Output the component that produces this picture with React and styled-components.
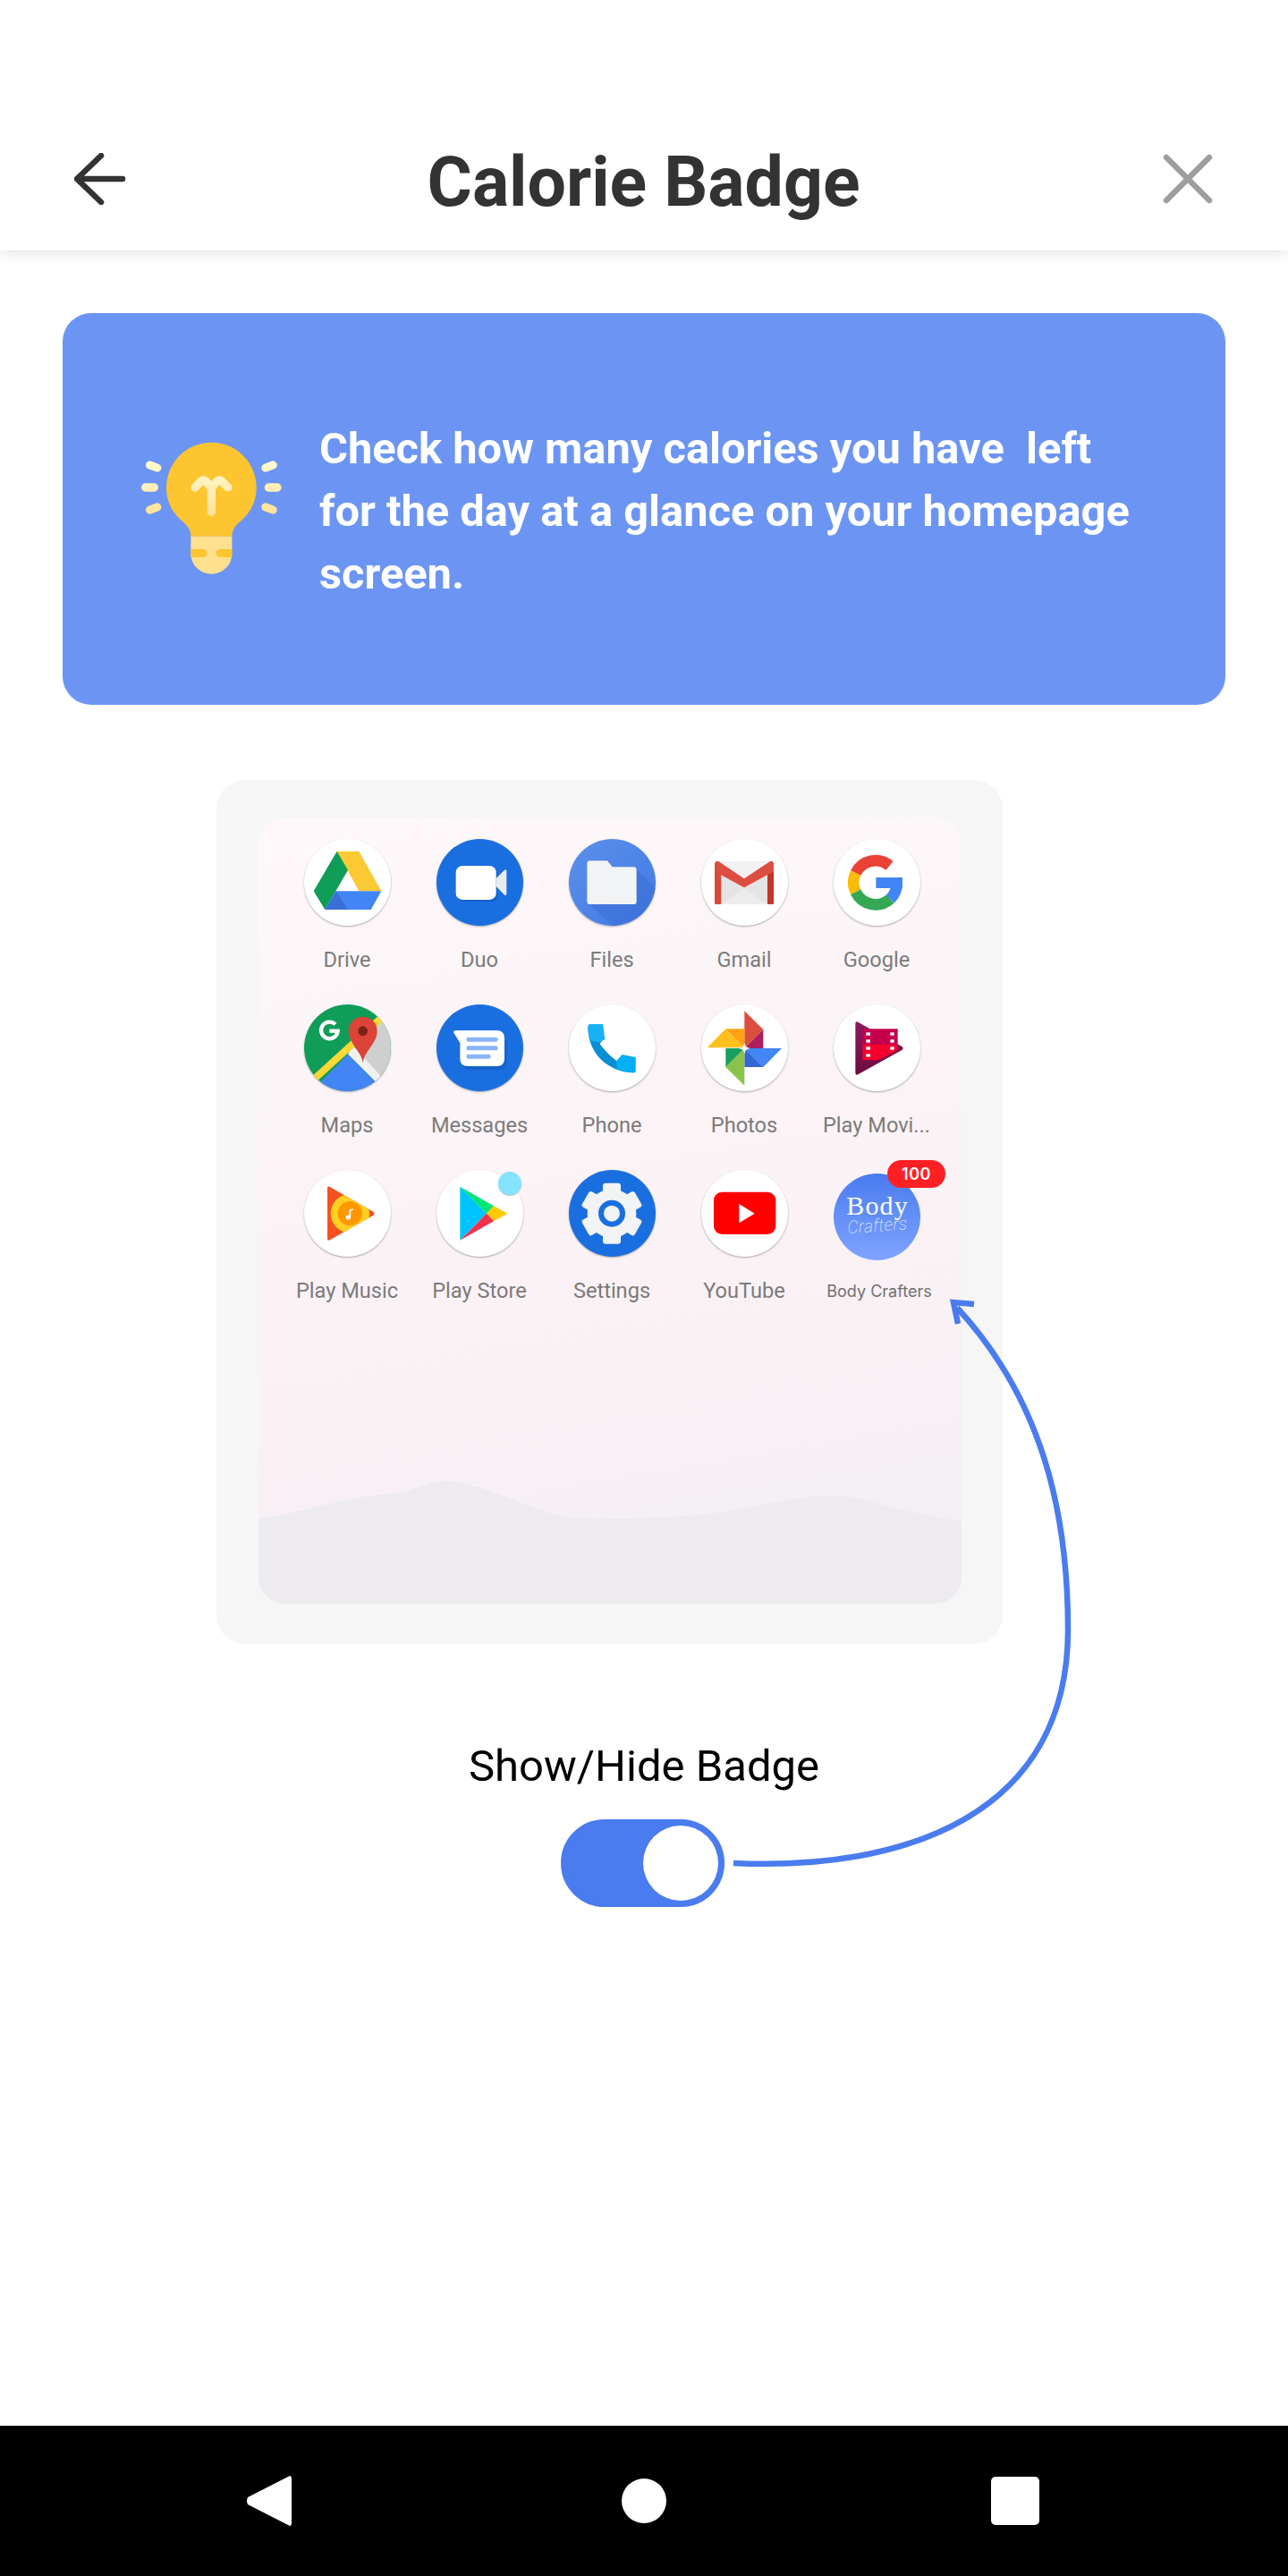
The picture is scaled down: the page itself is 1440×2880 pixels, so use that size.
import React from 'react';
import styled, { createGlobalStyle } from 'styled-components';

const GlobalStyle = createGlobalStyle`
  html, body {
    margin: 0;
    padding: 0;
    background: #fff;
  }
  * {
    box-sizing: border-box;
  }
`;

const Page = styled.div`
  position: relative;
  width: 1440px;
  height: 2880px;
  display: flex;
  flex-direction: column;
  overflow: hidden;
  font-family: Roboto, "Liberation Sans", sans-serif;
  background: #fff;
`;

const Header = styled.header`
  height: 280px;
  padding: 120px 84px 0 83px;
  display: grid;
  grid-template-columns: 1fr auto 1fr;
  align-items: center;
  flex: none;
  box-shadow: 0 2px 14px rgba(0, 0, 0, 0.13);
`;

const HeaderIcon = styled.svg`
  display: block;
  justify-self: ${p => (p.$end ? 'end' : 'start')};
  fill: none;
  stroke: ${p => p.$color};
  stroke-width: 6.5;
  stroke-linecap: round;
  stroke-linejoin: round;
`;

const Title = styled.h1`
  margin: 8px 0 0;
  font-size: 77px;
  line-height: 90px;
  font-weight: 700;
  color: #333;
`;

const InfoCard = styled.section`
  flex: none;
  height: 438px;
  margin: 70px 70px 0;
  padding: 6px 0 0 50px;
  display: flex;
  align-items: center;
  gap: 17px;
  border-radius: 32px;
  background: #6c95f3;
`;

const BulbIcon = styled.svg`
  flex: none;
  display: block;
  margin-top: -6px;
`;

const InfoText = styled.p`
  margin: 0;
  font-size: 48.8px;
  line-height: 70px;
  font-weight: 700;
  color: #fff;
  white-space: pre;
`;

const Frame = styled.div`
  flex: none;
  width: 879px;
  height: 966px;
  margin: 84px 0 0 242px;
  padding: 42px 46px 45px 47px;
  border-radius: 32px;
  background: #f6f6f6;
`;

const Screen = styled.div`
  position: relative;
  height: 100%;
  padding: 24px 0 0 25px;
  border-radius: 30px;
  overflow: hidden;
  background: linear-gradient(170deg, #fef8fa 0%, #fbf3f6 45%, #f8f0f4 75%, #f3eff4 90%);
`;

const Mountains = styled.svg`
  position: absolute;
  left: 0;
  bottom: 0;
  display: block;
`;

const AppGrid = styled.div`
  position: relative;
  display: grid;
  grid-template-columns: repeat(5, 148px);
  grid-auto-rows: 185px;
`;

const AppCell = styled.div`
  position: relative;
  display: flex;
  flex-direction: column;
  align-items: center;
`;

const Tile = styled.div`
  width: 97px;
  height: 97px;
  border-radius: 50%;
  overflow: hidden;
  background: ${p => p.$bg || '#fff'};
  box-shadow: 0 1px 2px rgba(0, 0, 0, 0.32);
  svg {
    display: block;
  }
`;

const LogoTile = styled(Tile)`
  margin-top: 4px;
  box-shadow: none;
`;

const AppLabel = styled.span`
  margin-top: 23px;
  font-size: 23.6px;
  line-height: 30px;
  color: #7b7b7b;
  white-space: nowrap;
`;

const LogoLabel = styled(AppLabel)`
  margin: 20px 0 0 6px;
  font-family: Inter, Roboto, sans-serif;
  font-size: 18px;
  color: #707070;
`;

const Dot = styled.span`
  position: absolute;
  left: 95px;
  top: 2px;
  width: 26px;
  height: 26px;
  border-radius: 50%;
  background: #84e3ff;
  box-shadow: 0 1px 1px rgba(0, 0, 0, 0.25);
`;

const CountBadge = styled.span`
  position: absolute;
  left: 86px;
  top: -11px;
  width: 65px;
  height: 31px;
  border-radius: 16px;
  background: #ff2024;
  color: #fff;
  font-family: Inter, Roboto, sans-serif;
  font-size: 18px;
  font-weight: 600;
  letter-spacing: 0.5px;
  line-height: 31px;
  text-align: center;
`;

const ToggleArea = styled.div`
  flex: none;
  display: flex;
  flex-direction: column;
  align-items: center;
  padding-top: 107px;
`;

const ToggleLabel = styled.div`
  font-size: 49px;
  line-height: 60px;
  color: #000;
`;

const Toggle = styled.div`
  width: 183px;
  height: 98px;
  margin: 29px 3px 0 0;
  display: flex;
  justify-content: flex-end;
  border: 7px solid #4a7bef;
  border-radius: 49px;
  background: #4a7bef;
`;

const Knob = styled.span`
  width: 84px;
  height: 84px;
  border-radius: 50%;
  background: #fff;
`;

const Callout = styled.svg`
  position: absolute;
  left: 800px;
  top: 1440px;
  display: block;
  fill: none;
  stroke: #4a7bef;
  stroke-width: 6.5;
`;

const NavBar = styled.nav`
  margin-top: auto;
  flex: none;
  height: 168px;
  background: #000;
  display: grid;
  grid-template-columns: 275px 51px 369px 50px 363px 54px;
  align-items: center;
`;

const NavBack = styled.svg`
  grid-column: 2;
  display: block;
`;

const NavHome = styled.span`
  grid-column: 4;
  width: 50px;
  height: 50px;
  border-radius: 50%;
  background: #fff;
`;

const NavRecent = styled.span`
  grid-column: 6;
  width: 54px;
  height: 54px;
  border-radius: 5px;
  background: #fff;
`;

const IconSvg = ({ box, children }) => (
  <svg width="97" height="97" viewBox={box}>{children}</svg>
);

const Bulb = () => (
  <BulbIcon width="220" height="200" viewBox="0 0 660 600">
    <defs>
      <linearGradient id="glow" gradientUnits="userSpaceOnUse" x1="0" y1="130" x2="0" y2="325">
        <stop offset="0" stopColor="#fffcd6" />
        <stop offset="1" stopColor="#ffe196" />
      </linearGradient>
    </defs>
    <path fill="#fdc530" d="M280 392C280 368 266 354 250 340C215 310 198 272 198 228A151 151 0 0 1 500 228C500 272 483 310 448 340C432 354 418 368 418 392Z" />
    <path fill="#ffe08f" d="M280 392H418V450A69 68 0 0 1 280 450Z" />
    <path fill="#fdc530" d="M280 435H321A13.5 13.5 0 0 1 321 462H280Z" />
    <path fill="#fdc530" d="M418 435H378A13.5 13.5 0 0 0 378 462H418Z" />
    <g fill="none" stroke="url(#glow)" strokeWidth="28" strokeLinecap="round" strokeLinejoin="round">
      <path d="M294 228L314 207Q322 200 330 207L349 228L368 207Q376 200 384 207L405 228" />
      <path d="M349 228V310" />
      <path d="M143 153L167 162M128 228H157M143 303L167 294M555 153L531 162M570 228H541M555 303L531 294" />
    </g>
  </BulbIcon>
);

const Drive = () => (
  <IconSvg box="178 113 291 291">
    <polygon fill="#fbc934" points="288,154 362,154 437,288 362,288" />
    <polygon fill="#0f9d58" points="288,154 325,217 248,350 210,288" />
    <polygon fill="#4285f4" points="285,288 437,288 402,350 248,350" />
    <polygon fill="#3b6fd8" points="285,288 325,350 248,350" />
  </IconSvg>
);

const Duo = () => (
  <IconSvg box="620 113 291 291">
    <rect x="689" y="209" width="135" height="115" rx="22" fill="#0f56b8" opacity="0.55" />
    <rect x="685" y="203" width="135" height="114" rx="22" fill="#fff" />
    <path fill="#e8ecef" d="M820 245L847 218Q855 212 855 222V296Q855 306 847 300L820 272Z" />
  </IconSvg>
);

const Files = () => (
  <IconSvg box="1066 113 291 291">
    <polygon fill="#3b6fd6" opacity="0.55" points="1293,215 1370,290 1370,420 1230,420 1127,325" />
    <path fill="#f1f3f4" d="M1137 186H1195L1212 207H1283Q1293 207 1293 217V322Q1293 332 1283 332H1137Q1127 332 1127 322V196Q1127 186 1137 186Z" />
  </IconSvg>
);

const Gmail = () => (
  <IconSvg box="310 113 291 291">
    <polygon fill="#f1f1f1" points="365,187 545,187 454,262" />
    <polygon fill="#e4e4e4" points="377,225 454,275 532,225 532,332 377,332" />
    <polygon fill="#ececec" points="377,332 454,278 532,332" />
    <rect x="355" y="205" width="22" height="127" rx="3" fill="#d9483b" />
    <rect x="532" y="205" width="21" height="127" rx="3" fill="#c1352a" />
    <path fill="#dc4e41" d="M355 198Q356 184 368 188L454 246L541 188Q553 184 553 198V222L454 276L355 222Z" />
  </IconSvg>
);

const Google = () => (
  <IconSvg box="755 113 291 291">
    <g fill="none" strokeWidth="38">
      <path stroke="#ea4335" d="M942.6 202.3A74 74 0 0 0 829 227" />
      <path stroke="#fbbc05" d="M829 227A74 74 0 0 0 829 291" />
      <path stroke="#34a853" d="M829 291A74 74 0 0 0 945 314" />
      <path stroke="#4285f4" d="M945 314A74 74 0 0 0 967 262" />
    </g>
    <rect x="897" y="242" width="89" height="36" fill="#4285f4" />
  </IconSvg>
);

const Maps = () => (
  <IconSvg box="178 668 291 291">
    <rect x="178" y="668" width="291" height="291" fill="#0f9d58" />
    <polygon fill="#cfcfcf" points="345,800 435,710 480,710 480,960 420,960 420,930" />
    <polygon fill="#f1f1f1" points="325,835 340,803 438,912 420,930" />
    <polygon fill="#4285f4" points="232,930 325,835 420,930 420,970 232,970" />
    <path stroke="#fdd835" strokeWidth="24" fill="none" d="M212 918L438 712" />
    <path stroke="#fff" strokeWidth="13" fill="none" d="M283 735A28 28 0 1 0 291 757H263" />
    <path fill="#db4437" d="M375 866C373 826 327 800 327 757A48 48 0 0 1 423 757C423 800 377 826 375 866Z" />
    <circle cx="375" cy="757" r="16" fill="#7b2117" />
  </IconSvg>
);

const Messages = () => (
  <IconSvg box="620 668 291 291">
    <path fill="#0f56b8" opacity="0.5" d="M700 790L706 862Q708 888 735 888H830Q855 888 855 860V790Z" />
    <path fill="#fff" d="M685 755H822Q848 755 848 781V850Q848 875 822 875H725Q699 875 699 850V797L678 763Q675 755 685 755Z" />
    <rect x="720" y="778" width="106" height="15" rx="7" fill="#8ab4f8" />
    <rect x="720" y="807" width="106" height="15" rx="7" fill="#8ab4f8" />
    <rect x="720" y="835" width="82" height="15" rx="7" fill="#8ab4f8" />
  </IconSvg>
);

const Phone = () => (
  <IconSvg box="1066 668 291 291">
    <path fill="#0a8fd3" d="M1130 745C1130 830 1195 895 1285 897L1290 860L1230 860C1200 838 1185 820 1170 800L1185 780L1140 740Z" />
    <path fill="#19b0f6" d="M1130 741Q1130 734 1137 734H1180L1187 785L1168 795L1140 790Q1130 770 1130 741Z" />
    <path fill="#05aef5" d="M1245 836L1290 845V892Q1290 897 1285 897Q1255 896 1228 885L1225 858Z" />
  </IconSvg>
);

const Photos = () => (
  <IconSvg box="310 668 291 291">
    <polygon fill="#db4f3f" points="455,690 518,752 455,815" />
    <polygon fill="#ad1e5c" points="518,752 518,815 455,815" />
    <polygon fill="#fdc01c" points="330,813 392,750 455,813" />
    <polygon fill="#ffa114" points="392,750 455,750 455,813" />
    <polygon fill="#4285f4" points="455,815 580,815 518,878" />
    <polygon fill="#3367d6" points="455,815 518,878 455,878" />
    <polygon fill="#8bc34a" points="455,815 455,940 392,878" />
    <polygon fill="#17a05d" points="392,815 455,815 392,878" />
    <polygon fill="#fff" points="455,797 460,810 473,815 460,820 455,833 450,820 437,815 450,810" />
  </IconSvg>
);

const PlayMovies = () => (
  <IconSvg box="755 668 291 291">
    <defs>
      <linearGradient id="moviesBack" x1="0" y1="0" x2="0" y2="1">
        <stop offset="0" stopColor="#8b1a5f" />
        <stop offset="1" stopColor="#6d0b3f" />
      </linearGradient>
    </defs>
    <path fill="url(#moviesBack)" d="M828 733Q828 722 838 728L984 809Q992 815 984 821L838 902Q828 908 828 897Z" />
    <polygon fill="#c4004c" points="852,750 970,750 970,803 852,803" />
    <polygon fill="#f5002d" points="852,803 970,803 970,822 905,855 852,855" />
    <g fill="#fff">
      <rect x="864" y="762" width="14" height="10" />
      <rect x="864" y="786" width="14" height="10" />
      <rect x="864" y="810" width="14" height="10" />
      <rect x="864" y="834" width="14" height="10" />
      <rect x="945" y="762" width="13" height="10" />
      <rect x="945" y="786" width="13" height="10" />
      <rect x="945" y="810" width="13" height="10" />
    </g>
  </IconSvg>
);

const PlayMusic = () => (
  <IconSvg box="178 84 291 291">
    <defs>
      <clipPath id="musicClip">
        <path d="M256 146Q256 136 266 142L410 224Q418 230 410 236L266 318Q256 324 256 314Z" />
      </clipPath>
    </defs>
    <g clipPath="url(#musicClip)">
      <rect x="250" y="130" width="170" height="200" fill="#f4511e" />
      <circle cx="332" cy="230" r="65" fill="#ffd01f" />
    </g>
    <circle cx="332" cy="230" r="41" fill="#ff9800" />
    <circle cx="326" cy="243" r="8" fill="#fff" />
    <path stroke="#fff" strokeWidth="5" fill="none" d="M332 243V219L342 216" />
  </IconSvg>
);

const PlayStore = () => (
  <IconSvg box="620 84 291 291">
    <polygon fill="#00c4ff" points="699,140 788,230 699,320" />
    <polygon fill="#00e676" points="699,140 812,205 788,230" />
    <polygon fill="#ffc800" points="812,205 858,230 812,256 788,230" />
    <polygon fill="#f4304e" points="699,320 788,230 812,256" />
  </IconSvg>
);

const SETTINGS_TEETH = [0, 60, 120, 180, 240, 300];

const Settings = () => (
  <IconSvg box="1066 84 291 291">
    <circle cx="1210" cy="230" r="82" fill="#f1f3f4" />
    {SETTINGS_TEETH.map(a => (
      <rect key={a} x="1180" y="128" width="60" height="50" rx="9" fill="#f1f3f4" transform={`rotate(${a} 1210 230)`} />
    ))}
    <circle cx="1210" cy="230" r="45" fill="#1a6fe0" />
    <circle cx="1210" cy="230" r="27" fill="#f1f3f4" />
  </IconSvg>
);

const YouTube = () => (
  <IconSvg box="68 84 291 291">
    <rect x="110" y="158" width="208" height="142" rx="28" fill="#f00" />
    <polygon fill="#fff" points="195,198 247,230 195,262" />
  </IconSvg>
);

const BodyCrafters = () => (
  <IconSvg box="517 95 291 291">
    <text x="560" y="232" fontFamily='"Liberation Serif", serif' fontSize="90" fill="#fff" textLength="205">Body</text>
    <text x="565" y="296" fontFamily="Roboto, sans-serif" fontWeight="100" fontStyle="italic" fontSize="58" fill="#fff" textLength="200" transform="rotate(-4 565 296)">Crafters</text>
  </IconSvg>
);

const APPS = [
  { name: 'Drive', Icon: Drive },
  { name: 'Duo', Icon: Duo, bg: '#1a6fe0' },
  { name: 'Files', Icon: Files, bg: 'linear-gradient(135deg, #5b90ea, #4279e2)' },
  { name: 'Gmail', Icon: Gmail },
  { name: 'Google', Icon: Google },
  { name: 'Maps', Icon: Maps },
  { name: 'Messages', Icon: Messages, bg: '#1a6fe0' },
  { name: 'Phone', Icon: Phone },
  { name: 'Photos', Icon: Photos },
  { name: 'Play Movi...', Icon: PlayMovies },
  { name: 'Play Music', Icon: PlayMusic },
  { name: 'Play Store', Icon: PlayStore, dot: true },
  { name: 'Settings', Icon: Settings, bg: '#1a6fe0' },
  { name: 'YouTube', Icon: YouTube },
];

const App = () => (
  <Page>
    <GlobalStyle />
    <Header>
      <HeaderIcon $color="#333" width="60" height="58" viewBox="83 171 60 58">
        <path d="M137 200H86M113 174L86 200L113 226" />
      </HeaderIcon>
      <Title>Calorie Badge</Title>
      <HeaderIcon $end $color="#9e9e9e" width="56" height="56" viewBox="1301 173 56 56">
        <path d="M1305 177L1353 225M1353 177L1305 225" />
      </HeaderIcon>
    </Header>

    <InfoCard>
      <Bulb />
      <InfoText>{'Check how many calories you have  left\nfor the day at a glance on your homepage\nscreen.'}</InfoText>
    </InfoCard>

    <Frame>
      <Screen>
        <Mountains width="786" height="140" viewBox="289 1655 786 140">
          <path fill="#edebf0" d="M289 1700C320 1696 370 1682 403 1676C425 1672 445 1672 453 1670C465 1666 480 1658 497 1658C515 1658 540 1666 570 1677C590 1685 610 1693 620 1695C635 1699 645 1700 653 1700C680 1701 740 1699 781 1696C830 1690 890 1676 921 1674C950 1672 975 1682 1000 1688C1030 1695 1055 1700 1075 1703V1795H289Z" />
        </Mountains>
        <AppGrid>
          {APPS.map(({ name, Icon, bg, dot }) => (
            <AppCell key={name}>
              <Tile $bg={bg}><Icon /></Tile>
              {dot && <Dot />}
              <AppLabel>{name}</AppLabel>
            </AppCell>
          ))}
          <AppCell>
            <LogoTile $bg="linear-gradient(180deg, #4a7bef, #7ea4ff)"><BodyCrafters /></LogoTile>
            <CountBadge>100</CountBadge>
            <LogoLabel>Body Crafters</LogoLabel>
          </AppCell>
        </AppGrid>
      </Screen>
    </Frame>

    <ToggleArea>
      <ToggleLabel>Show/Hide Badge</ToggleLabel>
      <Toggle><Knob /></Toggle>
    </ToggleArea>

    <Callout width="410" height="660" viewBox="800 1440 410 660">
      <path d="M820 2083C1010 2092 1194 2030 1194 1822C1194 1690 1165 1565 1070 1462" />
      <path d="M1089 1458L1066 1456L1071 1480" />
    </Callout>

    <NavBar>
      <NavBack width="51" height="56" viewBox="0 0 51 56">
        <path fill="#fff" d="M49 0Q51 0 51 4V52Q51 56 49 56L2 32Q0 28 2 24Z" />
      </NavBack>
      <NavHome />
      <NavRecent />
    </NavBar>
  </Page>
);

export default App;
